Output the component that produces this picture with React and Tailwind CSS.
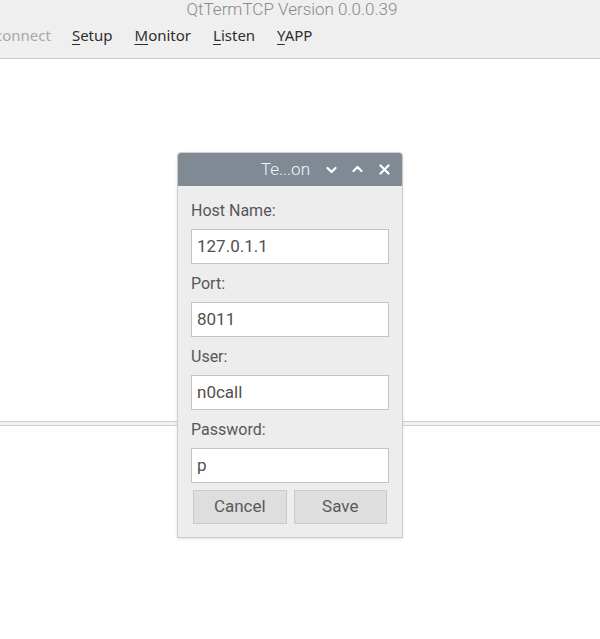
import React from "react";

const MENU = [
  { key: "S", rest: "etup" },
  { key: "M", rest: "onitor" },
  { key: "L", rest: "isten" },
  { key: "Y", rest: "APP" },
];

const FIELDS = [
  { label: "Host Name:", value: "127.0.1.1" },
  { label: "Port:", value: "8011" },
  { label: "User:", value: "n0call" },
  { label: "Password:", value: "p" },
];

const ChevronDown = () => (
  <svg width="11" height="8" viewBox="0 0 11 8" fill="none">
    <path d="M1.5 2l4 4 4-4" stroke="white" strokeWidth="2.2" strokeLinecap="round" strokeLinejoin="round" />
  </svg>
);

const ChevronUp = () => (
  <svg width="11" height="8" viewBox="0 0 11 8" fill="none">
    <path d="M1.5 6l4-4 4 4" stroke="white" strokeWidth="2.2" strokeLinecap="round" strokeLinejoin="round" />
  </svg>
);

const Close = () => (
  <svg width="11" height="11" viewBox="0 0 11 11" fill="none">
    <path d="M1.5 1.5l8 8M9.5 1.5l-8 8" stroke="white" strokeWidth="2.2" strokeLinecap="round" />
  </svg>
);

export default function App() {
  return (
    <div className="relative w-[600px] h-[639px] overflow-hidden bg-white font-['Roboto',sans-serif]">
      {/* window title + menu bar */}
      <div className="h-[59px] bg-[#efefef] border-b border-[#c9c9c9] flex flex-col">
        <div className="h-[22px] flex justify-center">
          <span className="text-[17px] leading-[20px] -mt-[1px] ml-[-16px] text-[#8a8a8a] font-light">
            QtTermTCP Version 0.0.0.39
          </span>
        </div>
        <div className="flex items-center h-[27px] text-[15px] font-['Noto_Sans',sans-serif] text-[#2e2e2e]">
          <span className="ml-[-5px] text-[#a8a8a8]">connect</span>
          <div className="flex ml-[21px] gap-[22px]">
            {MENU.map((m) => (
              <span key={m.key}>
                <span className="underline underline-offset-[3px]">{m.key}</span>
                {m.rest}
              </span>
            ))}
          </div>
        </div>
      </div>

      {/* splitter */}
      <div className="mt-[362px] h-[5px] border-y border-[#cfcfcf] bg-[#f2f2f2]" />

      {/* dialog */}
      <div className="absolute left-[177px] top-[152px] w-[226px] rounded-t-[4px] border border-[#cdcdcd] bg-[#ededed] shadow-sm">
        <div className="h-[33px] bg-[#7f8a95] rounded-t-[3px] flex items-center justify-end pr-[12px] text-white">
          <span className="text-[17px] font-light mr-[16px] text-[#f4f5f6]">Te...on</span>
          <span className="mr-[15px] mt-[1px]"><ChevronDown /></span>
          <span className="mr-[16px] -mt-[1px]"><ChevronUp /></span>
          <Close />
        </div>
        <div className="px-[13px] pt-[14px] pb-[13px] flex flex-col">
          {FIELDS.map((f) => (
            <div key={f.label} className="flex flex-col">
              <span className="text-[16px] leading-[20px] text-[#575757] h-[29px] pt-[1px]">{f.label}</span>
              <div className="h-[35px] bg-white border border-[#c4c4c4] flex items-center px-[5px] text-[17px] text-[#505050] mb-[9px]">
                {f.value}
              </div>
            </div>
          ))}
          <div className="flex gap-[7px] px-[2px] -mt-[2px]">
            {["Cancel", "Save"].map((b) => (
              <div
                key={b}
                className="flex-1 h-[34px] bg-[#dedede] border border-[#cacaca] flex items-center justify-center text-[17px] text-[#5a5a5a]"
              >
                {b}
              </div>
            ))}
          </div>
        </div>
      </div>
    </div>
  );
}
